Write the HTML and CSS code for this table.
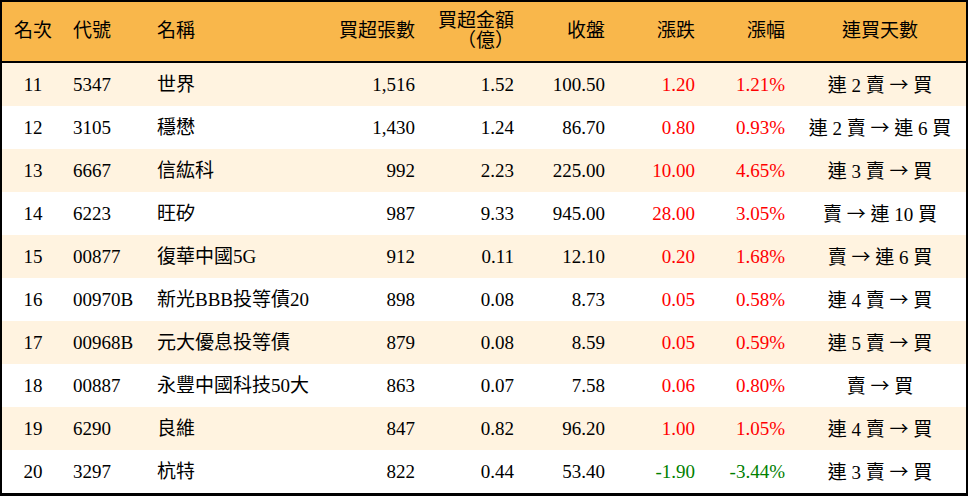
FILE: index.html
```html
<!DOCTYPE html>
<html lang="zh-Hant">
<head>
<meta charset="utf-8">
<title>買超排行</title>
<link rel="stylesheet" href="styles.css">
</head>
<body>
<div class="board">
  <table class="rank">
    <colgroup>
      <col class="c-rank"><col class="c-code"><col class="c-name"><col class="c-vol"><col class="c-amt"><col class="c-close"><col class="c-chg"><col class="c-pct"><col class="c-days">
    </colgroup>
    <thead>
      <tr>
        <th class="center">名次</th>
        <th class="left">代號</th>
        <th class="left">名稱</th>
        <th class="right">買超張數</th>
        <th class="right">買超金額<br>（億）</th>
        <th class="right">收盤</th>
        <th class="right">漲跌</th>
        <th class="right">漲幅</th>
        <th class="center">連買天數</th>
      </tr>
    </thead>
    <tbody>
      <tr class="odd"><td class="center">11</td><td class="left">5347</td><td class="left">世界</td><td class="right">1,516</td><td class="right">1.52</td><td class="right">100.50</td><td class="right up">1.20</td><td class="right up">1.21%</td><td class="center">連 2 賣 <span class="arr">→</span> 買</td></tr>
      <tr><td class="center">12</td><td class="left">3105</td><td class="left">穩懋</td><td class="right">1,430</td><td class="right">1.24</td><td class="right">86.70</td><td class="right up">0.80</td><td class="right up">0.93%</td><td class="center">連 2 賣 <span class="arr">→</span> 連 6 買</td></tr>
      <tr class="odd"><td class="center">13</td><td class="left">6667</td><td class="left">信紘科</td><td class="right">992</td><td class="right">2.23</td><td class="right">225.00</td><td class="right up">10.00</td><td class="right up">4.65%</td><td class="center">連 3 賣 <span class="arr">→</span> 買</td></tr>
      <tr><td class="center">14</td><td class="left">6223</td><td class="left">旺矽</td><td class="right">987</td><td class="right">9.33</td><td class="right">945.00</td><td class="right up">28.00</td><td class="right up">3.05%</td><td class="center">賣 <span class="arr">→</span> 連 10 買</td></tr>
      <tr class="odd"><td class="center">15</td><td class="left">00877</td><td class="left">復華中國5G</td><td class="right">912</td><td class="right">0.11</td><td class="right">12.10</td><td class="right up">0.20</td><td class="right up">1.68%</td><td class="center">賣 <span class="arr">→</span> 連 6 買</td></tr>
      <tr><td class="center">16</td><td class="left">00970B</td><td class="left">新光BBB投等債20</td><td class="right">898</td><td class="right">0.08</td><td class="right">8.73</td><td class="right up">0.05</td><td class="right up">0.58%</td><td class="center">連 4 賣 <span class="arr">→</span> 買</td></tr>
      <tr class="odd"><td class="center">17</td><td class="left">00968B</td><td class="left">元大優息投等債</td><td class="right">879</td><td class="right">0.08</td><td class="right">8.59</td><td class="right up">0.05</td><td class="right up">0.59%</td><td class="center">連 5 賣 <span class="arr">→</span> 買</td></tr>
      <tr><td class="center">18</td><td class="left">00887</td><td class="left">永豐中國科技50大</td><td class="right">863</td><td class="right">0.07</td><td class="right">7.58</td><td class="right up">0.06</td><td class="right up">0.80%</td><td class="center">賣 <span class="arr">→</span> 買</td></tr>
      <tr class="odd"><td class="center">19</td><td class="left">6290</td><td class="left">良維</td><td class="right">847</td><td class="right">0.82</td><td class="right">96.20</td><td class="right up">1.00</td><td class="right up">1.05%</td><td class="center">連 4 賣 <span class="arr">→</span> 買</td></tr>
      <tr><td class="center">20</td><td class="left">3297</td><td class="left">杭特</td><td class="right">822</td><td class="right">0.44</td><td class="right">53.40</td><td class="right down">-1.90</td><td class="right down">-3.44%</td><td class="center">連 3 賣 <span class="arr">→</span> 買</td></tr>
    </tbody>
  </table>
</div>
</body>
</html>
```

FILE: styles.css
```css
html, body {
  margin: 0;
  padding: 0;
  background: #ffffff;
}

body {
  font-family: "Liberation Serif", "Noto Sans CJK TC", serif;
  font-size: 19px;
  color: #000;
}

.board {
  width: 964px;
  border: 2px solid #000;
  border-bottom-width: 3px;
}

.rank {
  width: 964px;
  border-collapse: separate;
  border-spacing: 0;
  table-layout: fixed;
}

.c-rank { width: 62px; }
.c-code { width: 84px; }
.c-name { width: 182px; }
.c-vol { width: 94px; }
.c-amt { width: 99px; }
.c-close { width: 91px; }
.c-chg { width: 90px; }
.c-pct { width: 90px; }
.c-days { width: 172px; }

.rank th {
  background: #f9b74b;
  font-weight: normal;
  height: 61px;
  padding: 0 9px 1px;
  line-height: 20px;
  border-bottom: 2px solid #000;
  box-sizing: border-box;
  white-space: nowrap;
}

.rank td {
  height: 43px;
  padding: 0 9px;
  line-height: 20px;
  white-space: nowrap;
  box-sizing: border-box;
}

.rank tr.odd td {
  background: #fff3e0;
}

.center { text-align: center; }
.left { text-align: left; }
.right { text-align: right; }

.up { color: #ff0000; }
.down { color: #008000; }

.arr {
  font-family: "Noto Sans CJK TC", sans-serif;
}
```
